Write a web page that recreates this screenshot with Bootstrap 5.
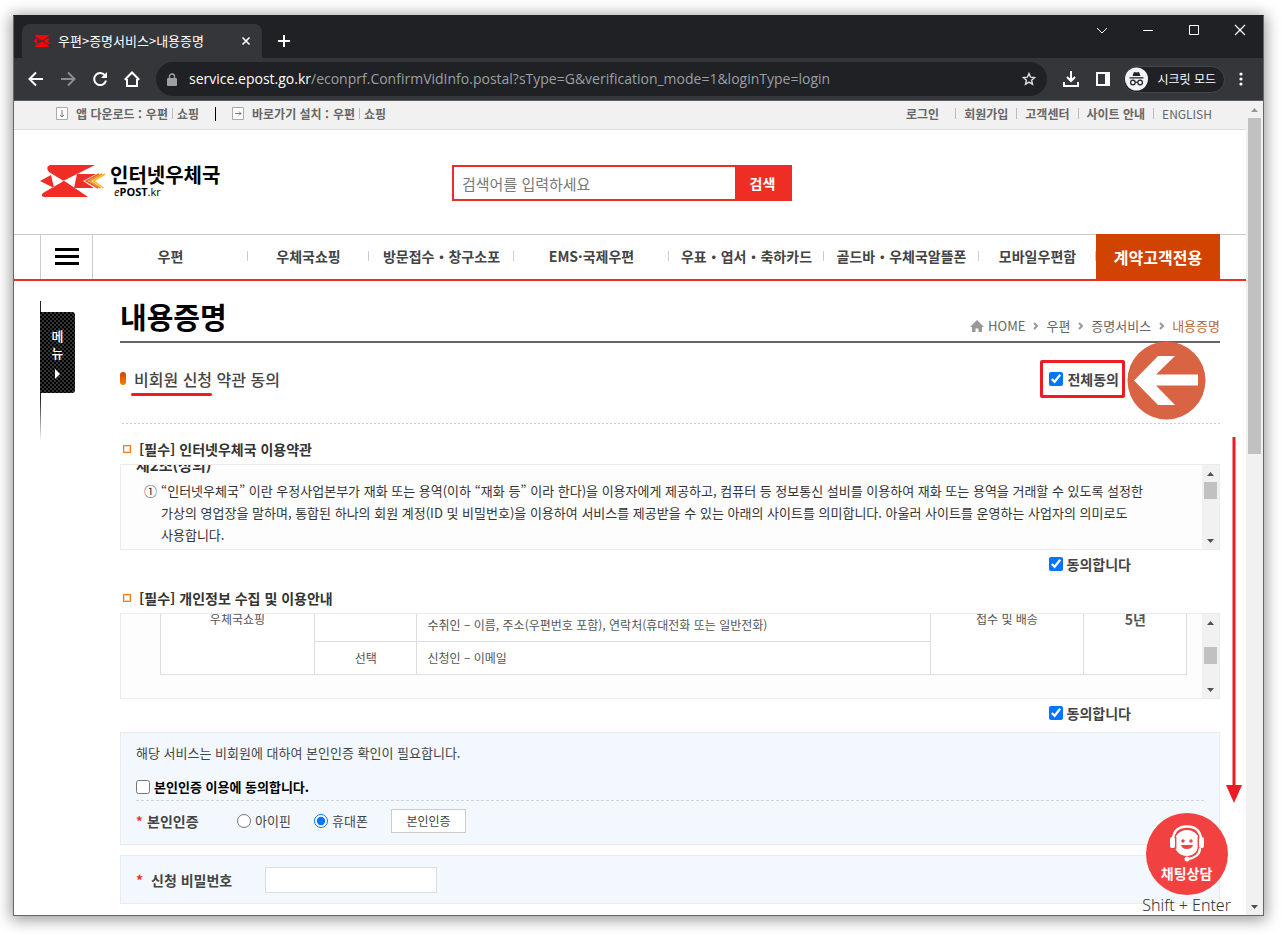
<!DOCTYPE html>
<html lang="ko">
<head>
<meta charset="utf-8">
<meta name="viewport" content="width=device-width, initial-scale=1">
<title>우편&gt;증명서비스&gt;내용증명</title>
<link href="https://cdn.jsdelivr.net/npm/bootstrap@5.3.0/dist/css/bootstrap.min.css" rel="stylesheet">
<style>
:root{--red:#ee2e24;--mark:#ed1c24;--ink:#444}
body{font-family:"Noto Sans CJK KR",sans-serif;font-size:14px;line-height:22px;color:var(--ink);background:#fff;padding:15px 17px 18px 13px}
a{color:inherit;text-decoration:none}
button{padding:0;border:0;background:none;color:inherit}
svg{display:block;flex:none}
.window{border:1px solid #666;border-top-color:#202124;box-shadow:0 2px 14px 2px rgba(0,0,0,.4)}
/* browser frame */
.titlebar{background:#202124;height:42px;color:#fff}
.tab{background:#35363a;width:240px;height:34px;border-radius:8px 8px 0 0;margin-left:8px;padding:0 10px 0 12px;font-size:13px}
.toolbar{background:#35363a;height:43px;border-bottom:1px solid #5a5b5e;color:#fff;padding:0 18px 0 14px}
.omnibox{background:#202124;height:34px;border-radius:17px;color:#9aa0a6;padding:0 11px;font-family:"Open Sans","Noto Sans",sans-serif;font-size:14px}
.omnibox b{font-weight:400;color:#fff}
.incog{background:#202124;border:1px solid #45464a;border-radius:14px;height:27px;color:#fff;font-size:12px;padding-right:8px;margin-left:12px}
.sbar{width:17px;background:#f1f1f1;color:#505050}
.sbar .arrow{height:17px;display:flex;align-items:center;justify-content:center}
.sbar .thumb{background:#c1c1c1;margin:0 2px}
/* utility strip */
.strip{background:#f1f1f1;border-bottom:1px solid #ddd;height:29px;font-size:12px;font-weight:700;color:#666;padding-bottom:3px}
.vline{width:1px;height:11px;background:#bbb}
.rule{width:1px;height:14px;background:#000}
.wrap{margin:0 26px}
.header{height:104px;padding-top:2px}
.header .edge{flex:1 1 0}
.brand{font-size:20px;line-height:22px}
.brand-en{font-family:"Open Sans",sans-serif;font-size:11px;line-height:12px}
.search{border:2px solid var(--red);height:36px}
.search input{border:0;border-radius:0;padding:0 8px;font-size:15px;width:281px;height:32px;outline:0}
.search input::placeholder{color:#777}
.search button{background:var(--red);color:#fff;width:55px;font-weight:700}
/* main navigation */
.gnb{border-top:1px solid #ccc;border-bottom:2px solid var(--red);height:47px;font-weight:700}
.gnb .burger{width:53px;border:solid #ccc;border-width:0 1px}
.gnb .item{display:flex;align-items:center;justify-content:center;position:relative;white-space:nowrap;padding-bottom:3px}
.gnb .item::after{content:"";position:absolute;right:0;top:16px;width:1px;height:10px;background:#ccc}
.gnb .biz{background:#d04300;color:#fff;font-weight:700;font-size:16px;width:124px;margin-top:-1px}
/* side menu */
.side{width:80px;padding-top:20px}
.side .rail{width:35px;height:140px;padding-top:11px;position:relative}
.side .rail::before{content:"";position:absolute;left:0;top:0;width:1px;height:100%;background:linear-gradient(#222 70%,#fff)}
.side button{position:relative;width:35px;height:81px;border-radius:0 3px 3px 0;color:#fff;font-size:13px;line-height:17px;font-weight:500;background:conic-gradient(#333 25%,#000 0 50%,#333 0 75%,#000 0) 0 0/4px 4px}
.title{font-size:29px;line-height:34px;font-weight:700;color:#000;margin:0}
.titlerow{height:62px;border-bottom:2px solid #666;padding-top:18px}
.crumb{font-size:13px;color:#666}
.crumb .now{color:#b5693a}
.pill{width:6px;height:13px;border-radius:3px;background:linear-gradient(#c84400,#ff7f00)}
.subrow{height:81px;padding-bottom:10px;background:linear-gradient(90deg,#ccc 50%,transparent 0) 2px bottom/4px 1px repeat-x}
.sub{font-size:16px;line-height:22px;font-weight:500;margin:0}
.under{position:relative}
.under::after{content:"";position:absolute;left:-3px;right:0;bottom:-5px;height:3px;border-radius:2px;background:var(--mark)}
.agreeall{border:3px solid var(--mark);border-radius:2px;height:38px;padding:0 3px 0 6px;margin-right:95px;font-weight:700;position:relative}
.agreeall svg{position:absolute;left:84px;top:-22px}
input[type=checkbox],input[type=radio]{margin:0;width:14px;height:14px;flex:none}
.sq{width:8px;height:8px;border:1px solid #f47a1c;box-shadow:inset 0 0 0 1px #fbd3b0}
.sec{font-size:14px;line-height:22px;font-weight:700;color:#333;margin:0;padding:14px 0 4px 3px}
.agree + .sec{padding-top:9px}
.termbox{border:1px solid #ebebeb;background:#fdfdfd;height:86px}
.clip{display:flex;flex-direction:column;justify-content:flex-end;overflow:hidden;min-width:0}
.clip>*{flex:none}
.terms{padding:0 15px 3px;color:#333;font-size:13px}
.terms h4{font-size:15px;line-height:22px;font-weight:700;margin:0 0 4px}
.tbl{margin:0 15px 23px 39px;background:#fff;border-collapse:collapse;font-size:12px;line-height:16px;color:#555;table-layout:fixed;text-align:center}
.tbl td{border:1px solid #ddd;padding:8px 10px}
.tbl tr:first-child td{height:78px;vertical-align:bottom}
.tbl tr:first-child td[rowspan]{vertical-align:middle}
.tbl .years{font-size:14px;font-weight:700}
.agree{height:28px;padding-right:89px;font-weight:700}
.panel{border:1px solid #ebebeb;background:#f3f8ff;padding:0 15px}
.p1{height:113px;margin-top:5px;padding-top:9px;font-size:13px}
.p2{height:49px;margin-top:10px;margin-bottom:11px}
.dash{border-bottom:1px dashed #d5d5d5;padding:12px 0 2px}
.ast{color:var(--red);font-weight:700;width:11px}
.field{font-size:14px;font-weight:700;width:90px}
.opt{width:77px}
.verify{background:#fff;border:1px solid #ccc;width:75px;height:24px;font-size:12px;line-height:20px}
.pw{background:#fff;border:1px solid #ddd;width:172px;height:26px}
.scrollhint{position:absolute;right:4px;top:335px}
.chat{position:absolute;right:15px;bottom:0;text-align:center;color:#333}
.chat .disc{width:82px;height:82px;border-radius:50%;background:#f24141;color:#fff;font-weight:700;padding-top:11px}
.chat small{font-family:"Noto Sans",sans-serif;font-size:16px;line-height:20px;font-weight:300;display:block;white-space:nowrap}
</style>
</head>
<body>
<div class="window">
  <div class="titlebar d-flex">
    <div class="tab d-flex align-items-center align-self-end">
      <svg width="16" height="14" viewBox="0 0 16 14"><path fill="red" d="M1 1h14l-1 2-6 3.500L2 3zM1 13h14l-1-2-6-3.500L2 11zM0 7l3-3v6zM16 4l-5 1.500L10 7l1 1.500 5 1.500-2-3z"/></svg>
      <span class="ms-2 flex-fill">우편&gt;증명서비스&gt;내용증명</span>
      <button aria-label="탭 닫기"><svg width="12" height="12" viewBox="0 0 12 12" stroke="#fff" stroke-width="1.600"><path d="M2.500 2.500l7 7M9.500 2.500l-7 7"/></svg></button>
    </div>
    <button class="align-self-end mb-2 ms-3" aria-label="새 탭"><svg width="12" height="18" viewBox="0 0 12 18" stroke="#fff" stroke-width="2"><path d="M0 9h12M6 3v12"/></svg></button>
    <div class="ms-auto d-flex align-items-start pt-2">
      <svg width="46" height="14" viewBox="0 0 46 14" fill="none" stroke="#fff"><path d="M18 4l5 5 5-5"/></svg>
      <svg width="46" height="14" viewBox="0 0 46 14" fill="none" stroke="#fff"><path d="M18 6.500h10"/></svg>
      <svg width="46" height="14" viewBox="0 0 46 14" fill="none" stroke="#fff"><path d="M18.500 1.500h9v9h-9z"/></svg>
      <svg width="46" height="14" viewBox="0 0 46 14" fill="none" stroke="#fff" stroke-width="1.200"><path d="M18 1l10 10M28 1L18 11"/></svg>
    </div>
  </div>
  <div class="toolbar d-flex align-items-center">
    <svg width="16" height="16" viewBox="0 0 16 16" fill="none" stroke="#fff" stroke-width="2"><path d="M15 8H2M8 1.500L1.500 8 8 14.500"/></svg>
    <svg class="ms-3" width="16" height="16" viewBox="0 0 16 16" fill="none" stroke="#8b8c8f" stroke-width="2"><path d="M1 8h13M8 1.500L14.500 8 8 14.500"/></svg>
    <svg class="ms-3" width="16" height="16" viewBox="0 0 16 16"><path d="M13.200 4.800A6 6 0 1 0 14 9.500" fill="none" stroke="#fff" stroke-width="2"/><path d="M15 1v6H9z" fill="#fff"/></svg>
    <svg class="ms-3" width="16" height="16" viewBox="0 0 16 16" fill="none" stroke="#fff" stroke-width="2"><path d="M0.800 8.800L8 1.500l7.200 7.300M3 8v7h10V8"/></svg>
    <div class="omnibox d-flex align-items-center flex-fill ms-3">
      <svg class="me-2" width="10" height="13" viewBox="0 0 10 13"><path fill="#9aa0a6" d="M1 5h8a1 1 0 0 1 1 1v6a1 1 0 0 1-1 1H1a1 1 0 0 1-1-1V6a1 1 0 0 1 1-1z"/><path d="M2.500 5.500V3.500a2.500 2.500 0 0 1 5 0v2" fill="none" stroke="#9aa0a6" stroke-width="1.400"/></svg>
      <span class="flex-fill ms-1"><b>service.epost.go.kr</b>/econprf.ConfirmVidInfo.postal?sType=G&amp;verification_mode=1&amp;loginType=login</span>
      <svg width="14" height="14" viewBox="0 0 14 14" fill="none" stroke="#ddd" stroke-width="1.400"><path d="M7 1.500l1.600 3.700 4 .3-3 2.700.9 4L7 10.100l-3.500 2.100.9-4-3-2.700 4-.3z"/></svg>
    </div>
    <svg class="ms-3" width="16" height="16" viewBox="0 0 16 16" fill="none" stroke="#fff" stroke-width="2"><path d="M8 0v10M4 6l4 4 4-4M1 11v4h14v-4"/></svg>
    <svg class="ms-3" width="16" height="16" viewBox="0 0 16 16"><path fill="#fff" d="M1 1h14v14H1zM3 3v10h7V3z" fill-rule="evenodd"/></svg>
    <div class="incog d-flex align-items-center">
      <svg class="me-2" width="25" height="24" viewBox="0 0 24 24"><circle cx="12" cy="12" r="11.500" fill="#f1f3f4"/><path fill="#202124" d="M8 9l1.500-4 2.500.6 2.500-.6L16 9zM5 10.300h14v1.200H5z"/><g fill="none" stroke="#202124" stroke-width="1.200"><circle cx="8.400" cy="15.500" r="2.300"/><circle cx="15.600" cy="15.500" r="2.300"/><path d="M10.700 15.200h2.600"/></g></svg>
      <span>시크릿 모드</span>
    </div>
    <svg class="ms-2" width="12" height="16" viewBox="0 0 12 16" fill="#fff"><circle cx="8" cy="3" r="1.600"/><circle cx="8" cy="8" r="1.600"/><circle cx="8" cy="13" r="1.600"/></svg>
  </div>

  <div class="d-flex">
    <div class="flex-fill position-relative">
      <div class="strip">
        <div class="wrap d-flex align-items-center h-100">
          <svg class="ms-3" width="12" height="13" viewBox="0 0 12 13" fill="none" stroke="#aaa"><path fill="#fff" d="M.5.500h11v12H.5z"/><path stroke="#777" d="M6 3v7M4 8l2 2 2-2"/></svg>
          <span class="ms-2">앱 다운로드 :</span><a href="#" class="ms-1">우편</a><i class="vline mx-1"></i><a href="#">쇼핑</a>
          <i class="rule mx-3"></i>
          <svg width="12" height="13" viewBox="0 0 12 13" fill="none" stroke="#aaa"><path fill="#fff" d="M.5.500h11v12H.5z"/><path stroke="#777" d="M3 6.500h6M7 4.500l2 2-2 2"/></svg>
          <span class="ms-2">바로가기 설치 :</span><a href="#" class="ms-1">우편</a><i class="vline mx-1"></i><a href="#">쇼핑</a>
          <nav class="ms-auto d-flex align-items-center gap-2 me-2">
            <a href="#" class="me-2">로그인</a><i class="vline"></i><a href="#">회원가입</a><i class="vline"></i><a href="#">고객센터</a><i class="vline"></i><a href="#">사이트 안내</a><i class="vline"></i><a href="#" class="fw-normal">ENGLISH</a>
          </nav>
        </div>
      </div>

      <header class="header wrap d-flex align-items-center">
        <div class="edge">
          <a href="#" class="d-inline-flex align-items-center text-black">
            <svg width="66" height="34" viewBox="0 0 66 34"><g fill="#ee2e24"><path d="M10 1h45L25 16Q23.500 17 22 16L9 8Q5 3 10 1zM4 33h44L26 18Q23.500 16 22 18L3 29Q0 32 4 33zM0 17l11-6 3 13zM37 10h19L43 17l11 7H34z"/></g><g fill="none" stroke-width="1.500"><path stroke="#ee5a24" d="M59 10L46 17l12 7"/><path stroke="#f58a1f" d="M62 10L49.500 17l11 7"/><path stroke="#fdb913" d="M65 10L53.500 17l10 7"/></g></svg>
            <span class="ms-1"><span class="brand d-block fw-bold">인터넷우체국</span><span class="brand-en d-block ps-1"><i>e</i><b>POST</b>.kr</span></span>
          </a>
        </div>
        <form class="search d-flex me-3">
          <input type="text" placeholder="검색어를 입력하세요" aria-label="검색어"><button type="button">검색</button>
        </form>
        <div class="edge"></div>
      </header>

      <nav class="gnb">
        <div class="wrap d-flex h-100">
          <button class="burger d-flex align-items-center justify-content-center" aria-label="전체 메뉴"><svg width="24" height="18" viewBox="0 0 24 18"><path d="M0 1.500h24M0 8.500h24M0 15.500h24" stroke="#000" stroke-width="3"/></svg></button>
          <a href="#" class="item" style="flex:155 0 0">우편</a>
          <a href="#" class="item" style="flex:121 0 0">우체국쇼핑</a>
          <a href="#" class="item" style="flex:145 0 0">방문접수・창구소포</a>
          <a href="#" class="item" style="flex:155 0 0">EMS·국제우편</a>
          <a href="#" class="item" style="flex:155 0 0">우표・엽서・축하카드</a>
          <a href="#" class="item" style="flex:155 0 0">골드바・우체국알뜰폰</a>
          <a href="#" class="item" style="flex:117 0 0">모바일우편함</a>
          <a href="#" class="biz d-flex align-items-center justify-content-center">계약고객전용</a>
        </div>
      </nav>

      <div class="wrap d-flex">
        <aside class="side flex-shrink-0"><div class="rail"><button>메<br>뉴<svg class="mx-auto mt-2" width="6" height="10" viewBox="0 0 6 10"><path fill="#fff" d="M0 0l5 5-5 5z"/></svg></button></div></aside>
        <main class="flex-fill">
          <div class="titlerow d-flex justify-content-between">
            <h1 class="title">내용증명</h1>
            <nav class="crumb d-flex align-items-center align-self-end mb-1 gap-2">
              <a href="#" class="d-flex align-items-center gap-1"><svg width="14" height="12" viewBox="0 0 14 12"><path fill="#999" d="M7 0l7 7h-2v5H8.500V8.500h-3V12H2V7H0z"/></svg>HOME</a>
              <svg width="5" height="8" viewBox="0 0 5 8" fill="none" stroke="#999" stroke-width="2"><path d="M1 1l3 3-3 3"/></svg><a href="#">우편</a>
              <svg width="5" height="8" viewBox="0 0 5 8" fill="none" stroke="#999" stroke-width="2"><path d="M1 1l3 3-3 3"/></svg><a href="#">증명서비스</a>
              <svg width="5" height="8" viewBox="0 0 5 8" fill="none" stroke="#999" stroke-width="2"><path d="M1 1l3 3-3 3"/></svg><a href="#" class="now">내용증명</a>
            </nav>
          </div>
          <div class="subrow d-flex align-items-center">
            <i class="pill me-2"></i>
            <h2 class="sub"><span class="under">비회원 신청</span> 약관 동의</h2>
            <label class="agreeall d-flex align-items-center gap-1 ms-auto"><input type="checkbox" checked>전체동의
              <svg width="79" height="79" viewBox="0 0 79 79"><circle cx="39.500" cy="39.500" r="39" fill="#d96444"/><path fill="#fff" d="M7 39.500L31 15h17L29 33.500h42v11H29L48 64H31z"/></svg>
            </label>
          </div>

          <h3 class="sec d-flex align-items-center"><i class="sq me-2"></i>[필수] 인터넷우체국 이용약관</h3>
          <div class="termbox d-flex">
            <div class="clip terms flex-fill">
              <h4>제2조(정의)</h4>
              <div class="d-flex"><span class="ps-2 pe-1">①</span><span class="text-nowrap">“인터넷우체국” 이란 우정사업본부가 재화 또는 용역(이하 “재화 등” 이라 한다)을 이용자에게 제공하고, 컴퓨터 등 정보통신 설비를 이용하여 재화 또는 용역을 거래할 수 있도록 설정한<br>가상의 영업장을 말하며, 통합된 하나의 회원 계정(ID 및 비밀번호)을 이용하여 서비스를 제공받을 수 있는 아래의 사이트를 의미합니다. 아울러 사이트를 운영하는 사업자의 의미로도<br>사용합니다.</span></div>
            </div>
            <div class="sbar d-flex flex-column flex-shrink-0"><span class="arrow"><svg width="7" height="4" viewBox="0 0 7 4"><path fill="#505050" d="M3.500 0L7 4H0z"/></svg></span><i class="thumb" style="height:17px"></i><span class="arrow mt-auto"><svg width="7" height="4" viewBox="0 0 7 4"><path fill="#505050" d="M0 0h7L3.500 4z"/></svg></span></div>
          </div>
          <label class="agree d-flex align-items-center justify-content-end gap-1"><input type="checkbox" checked>동의합니다</label>

          <h3 class="sec d-flex align-items-center"><i class="sq me-2"></i>[필수] 개인정보 수집 및 이용안내</h3>
          <div class="termbox d-flex">
            <div class="clip flex-fill">
              <table class="tbl">
                <colgroup><col style="width:15%"><col style="width:10%"><col style="width:50%"><col style="width:15%"><col style="width:10%"></colgroup>
                <tr><td rowspan="2">우체국쇼핑</td><td></td><td class="text-start">수취인 – 이름, 주소(우편번호 포함), 연락처(휴대전화 또는 일반전화)</td><td rowspan="2">접수 및 배송</td><td rowspan="2" class="years">5년</td></tr>
                <tr><td>선택</td><td class="text-start">신청인 – 이메일</td></tr>
              </table>
            </div>
            <div class="sbar d-flex flex-column flex-shrink-0"><span class="arrow"><svg width="7" height="4" viewBox="0 0 7 4"><path fill="#505050" d="M3.500 0L7 4H0z"/></svg></span><i class="thumb mt-3" style="height:17px"></i><span class="arrow mt-auto"><svg width="7" height="4" viewBox="0 0 7 4"><path fill="#505050" d="M0 0h7L3.500 4z"/></svg></span></div>
          </div>
          <label class="agree d-flex align-items-center justify-content-end gap-1"><input type="checkbox" checked>동의합니다</label>

          <section class="panel p1">
            <div>해당 서비스는 비회원에 대하여 본인인증 확인이 필요합니다.</div>
            <div class="dash"><label class="d-flex align-items-center gap-1 text-black fw-bold"><input type="checkbox">본인인증 이용에 동의합니다.</label></div>
            <div class="d-flex align-items-center pt-2">
              <span class="ast">*</span><span class="field">본인인증</span>
              <label class="opt d-flex align-items-center gap-1"><input type="radio" name="auth">아이핀</label>
              <label class="opt d-flex align-items-center gap-1"><input type="radio" name="auth" checked>휴대폰</label>
              <button class="verify">본인인증</button>
            </div>
          </section>
          <section class="panel p2 d-flex align-items-center">
            <span class="ast me-1">*</span><label class="field me-4" for="pw">신청 비밀번호</label><input class="pw" id="pw" type="password">
          </section>
        </main>
      </div>
      <svg class="scrollhint" width="16" height="367" viewBox="0 0 16 367"><path d="M8 1v350" stroke="#ed1c24" stroke-width="3"/><path fill="#ed1c24" d="M0 349h16L8 367z"/></svg>
      <a href="#" class="chat">
        <span class="disc d-block mx-auto"><svg class="mx-auto" width="36" height="38" viewBox="0 0 36 38"><circle cx="18" cy="19" r="13" fill="#fff"/><path d="M4 15C5 5 11 2.500 18 2.500S31 5 32 15M31 24c0 6-5 10-12 11" fill="none" stroke="#fff" stroke-width="2.500"/><path d="M5.500 15C7 7 12 5 18 5s11 2 12.500 10" fill="none" stroke="#f24141" stroke-width="1.200"/><rect x="1" y="13" width="5" height="11" rx="2" fill="#fff"/><rect x="30" y="13" width="5" height="11" rx="2" fill="#fff"/><path d="M6.700 13v12M29.300 13v11c-1 6-5 8-10 9" fill="none" stroke="#f24141" stroke-width="1.400"/><circle cx="18" cy="35" r="2.500" fill="#fff"/><g fill="#f24141"><circle cx="14" cy="17" r="1.700"/><circle cx="22" cy="17" r="1.700"/><path d="M12 21h12q-1 4-6 4t-6-4z"/></g></svg><span class="d-block">채팅상담</span></span>
        <small>Shift + Enter</small>
      </a>
    </div>
    <div class="sbar d-flex flex-column flex-shrink-0"><span class="arrow"><svg width="7" height="4" viewBox="0 0 7 4"><path fill="#999" d="M3.500 0L7 4H0z"/></svg></span><i class="thumb" style="flex:0 0 41.3%"></i><span class="arrow mt-auto"><svg width="7" height="4" viewBox="0 0 7 4"><path fill="#505050" d="M0 0h7L3.500 4z"/></svg></span></div>
  </div>
</div>
<script src="https://cdn.jsdelivr.net/npm/bootstrap@5.3.0/dist/js/bootstrap.bundle.min.js"></script>
</body>
</html>
